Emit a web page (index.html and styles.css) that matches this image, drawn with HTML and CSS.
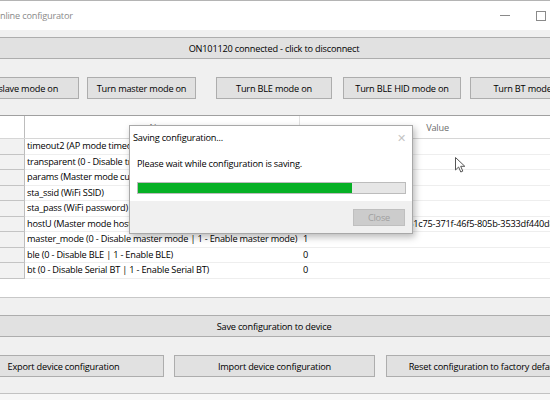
FILE: index.html
```html
<!DOCTYPE html>
<html>
<head>
<meta charset="utf-8">
<link rel="stylesheet" href="styles.css">
</head>
<body>
<div class="screen">
  <div class="titlebar">
    <span class="title">Online configurator</span>
    <div class="controls">
      <span class="ctl"><span class="min-glyph"></span></span>
      <span class="ctl"><span class="max-glyph"></span></span>
      <span class="ctl">✕</span>
    </div>
  </div>
  <div class="content">
    <div class="btn connect">ON101120 connected - click to disconnect</div>
    <div class="btn-row top-row">
      <div class="btn b-slave">Turn slave mode on</div>
      <div class="btn b-master">Turn master mode on</div>
      <div class="btn b-ble">Turn BLE mode on</div>
      <div class="btn b-hid">Turn BLE HID mode on</div>
      <div class="btn b-bt">Turn BT mode on</div>
    </div>
    <div class="grid">
      <div class="grid-head">
        <div class="rh"></div>
        <div class="ch col-name">Name</div>
        <div class="ch col-value">Value</div>
      </div>
      <div class="grid-row"><div class="rh"></div><div class="cell col-name">timeout2 (AP mode timeout in seconds)</div><div class="cell col-value">300</div></div>
      <div class="grid-row"><div class="rh"></div><div class="cell col-name">transparent (0 - Disable transparent mode | 1 - Enable transparent mode)</div><div class="cell col-value">0</div></div>
      <div class="grid-row"><div class="rh"></div><div class="cell col-name">params (Master mode custom parameters)</div><div class="cell col-value"></div></div>
      <div class="grid-row"><div class="rh"></div><div class="cell col-name">sta_ssid (WiFi SSID)</div><div class="cell col-value">ONLINE</div></div>
      <div class="grid-row"><div class="rh"></div><div class="cell col-name">sta_pass (WiFi password)</div><div class="cell col-value">********</div></div>
      <div class="grid-row"><div class="rh"></div><div class="cell col-name">hostU (Master mode host UUID)</div><div class="cell col-value">4fafc201-1fb5-459e-8fcc-c51c75-371f-46f5-805b-3533df440d8e</div></div>
      <div class="grid-row"><div class="rh"></div><div class="cell col-name">master_mode (0 - Disable master mode | 1 - Enable master mode)</div><div class="cell col-value">1</div></div>
      <div class="grid-row"><div class="rh"></div><div class="cell col-name">ble (0 - Disable BLE | 1 - Enable BLE)</div><div class="cell col-value">0</div></div>
      <div class="grid-row"><div class="rh"></div><div class="cell col-name">bt (0 - Disable Serial BT | 1 - Enable Serial BT)</div><div class="cell col-value">0</div></div>
    </div>
    <div class="btn save">Save configuration to device</div>
    <div class="btn-row bottom-row">
      <div class="btn wide">Export device configuration</div>
      <div class="btn wide">Import device configuration</div>
      <div class="btn wide">Reset configuration to factory defaults</div>
    </div>
  </div>
  <div class="window-bottom"></div>

  <div class="dialog">
    <div class="dlg-title">
      <span>Saving configuration...</span>
      <span class="dlg-x">✕</span>
    </div>
    <div class="dlg-body">
      <div class="dlg-msg">Please wait while configuration is saving.</div>
      <div class="progress"><div class="progress-fill"></div></div>
    </div>
    <div class="dlg-footer">
      <div class="dlg-close">Close</div>
    </div>
  </div>

  <svg class="cursor" width="11" height="17" viewBox="0 0 11 17">
    <path d="M0.5 0.5 L0.5 13 L3.6 10 L5.8 15 L7.8 14.1 L5.7 9.3 L9.8 9.3 Z" fill="#ffffff" stroke="#555555" stroke-width="1" stroke-linejoin="round"/>
  </svg>
</div>
</body>
</html>
```
FILE: styles.css
```css
* { box-sizing: border-box; }
html, body { margin: 0; padding: 0; }
body {
  width: 550px;
  height: 400px;
  overflow: hidden;
  background: #f0f0f0;
  font-family: "Open Sans", "Noto Sans", "DejaVu Sans", sans-serif;
  font-size: 9.2px;
  letter-spacing: -0.2px;
  color: #000;
}
.screen {
  position: relative;
  width: 550px;
  height: 400px;
  overflow: hidden;
  background: #f0f0f0;
}
.titlebar {
  height: 30px;
  background: #ffffff;
  border-top: 1px solid #b4b4b4;
  display: flex;
  align-items: center;
  justify-content: space-between;
}
.title {
  margin-left: -7px;
  color: #8a8a8a;
  white-space: nowrap;
}
.controls {
  display: flex;
  margin-right: -45px;
  height: 100%;
}
.ctl {
  width: 36px;
  height: 100%;
  display: flex;
  align-items: center;
  justify-content: center;
  color: #888;
}
.min-glyph {
  width: 10px;
  height: 1px;
  background: #8a8a8a;
}
.max-glyph {
  width: 10px;
  height: 10px;
  border: 1px solid #8a8a8a;
}
.content {
  padding-top: 7px;
}
.btn {
  height: 22px;
  background: #e1e1e1;
  border: 1px solid #adadad;
  display: flex;
  align-items: center;
  justify-content: center;
  white-space: nowrap;
  overflow: hidden;
}
.connect {
  margin: 0 -8px 0 -10px;
}
.btn-row {
  display: flex;
  margin-top: 18px;
  height: 22px;
}
.top-row .btn { flex: none; }
.b-slave { margin-left: -44px; width: 123px; }
.b-master { margin-left: 8px; width: 109px; }
.b-ble { margin-left: 20px; width: 116px; }
.b-hid { margin-left: 11px; width: 118px; }
.b-bt { margin-left: 9px; width: 118px; }

.grid {
  margin: 16px -30px 0 0;
  height: 183px;
  background: #ffffff;
  border-top: 1px solid #a0a0a0;
  border-bottom: 1px solid #c8c8c8;
}
.grid-head {
  display: flex;
  height: 23px;
  border-bottom: 1px solid #d6d6d6;
}
.grid-head .rh {
  background: #ffffff;
  border-bottom: none;
}
.rh {
  flex: none;
  width: 25px;
  background: #f2f2f2;
  border-right: 1px solid #bdbdbd;
  border-bottom: 1px solid #c4c4c4;
}
.ch {
  flex: none;
  display: flex;
  align-items: center;
  justify-content: center;
  color: #6d6d6d;
}
.ch.col-name { border-right: 1px solid #e2e2e2; }
.col-name { width: 275px; }
.col-value { width: 275px; }
.grid-row {
  display: flex;
  height: 15.5px;
}
.cell {
  flex: none;
  border-bottom: 1px solid #eeeeee;
  white-space: nowrap;
  overflow: hidden;
  line-height: 14.5px;
}
.cell.col-name { padding-left: 2px; }
.cell.col-value { padding-left: 3px; }

.save {
  margin: 17px -8px 0 -10px;
}
.bottom-row .btn { flex: none; width: 201px; }
.bottom-row .btn:first-child { margin-left: -37px; }
.bottom-row .btn + .btn { margin-left: 10px; }
.bottom-row .btn:last-child { margin-left: 11px; }
.window-bottom {
  margin-top: 16px;
  height: 7px;
  border-top: 1px solid #c2c2c2;
  background: #f7f7f7;
}

.dialog {
  position: absolute;
  left: 129px;
  top: 125px;
  width: 284px;
  height: 109px;
  background: #ffffff;
  border: 1px solid #a8a8a8;
  box-shadow: 2px 3px 7px rgba(0, 0, 0, 0.28);
  display: flex;
  flex-direction: column;
}
.dlg-title {
  height: 22px;
  padding: 0 6px 0 3px;
  display: flex;
  align-items: center;
  justify-content: space-between;
  color: #000;
}
.dlg-x {
  color: #c4c4c4;
  font-size: 11px;
}
.dlg-body {
  height: 53px;
  padding: 10px 6px 0 7px;
}
.dlg-msg {
  height: 12px;
  line-height: 12px;
}
.progress {
  margin-top: 12px;
  height: 12px;
  width: 269px;
  background: #e6e6e6;
  border: 1px solid #bcbcbc;
}
.progress-fill {
  width: 80%;
  height: 100%;
  background: #06b025;
}
.dlg-footer {
  flex: 1;
  background: #f0f0f0;
  padding: 8px 7px 0 0;
  display: flex;
  justify-content: flex-end;
  align-items: flex-start;
}
.dlg-close {
  width: 52px;
  height: 17px;
  background: #cccccc;
  border: 1px solid #bfbfbf;
  color: #a0a0a0;
  display: flex;
  align-items: center;
  justify-content: center;
}
.cursor {
  position: absolute;
  left: 455px;
  top: 157px;
}
```
